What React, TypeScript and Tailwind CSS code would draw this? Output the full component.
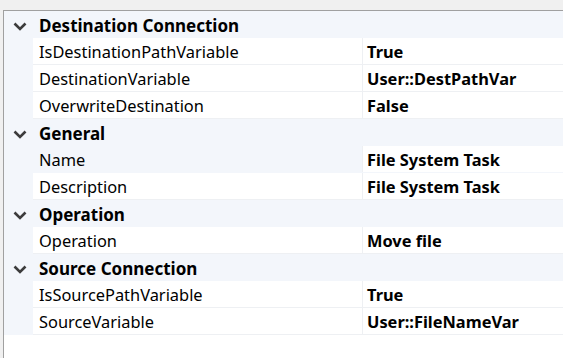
import React from 'react';

type Prop = { name: string; value: string; selected?: boolean };
type Category = { title: string; props: Prop[] };

const categories: Category[] = [
  {
    title: 'Destination Connection',
    props: [
      { name: 'IsDestinationPathVariable', value: 'True' },
      { name: 'DestinationVariable', value: 'User::DestPathVar' },
      { name: 'OverwriteDestination', value: 'False' },
    ],
  },
  {
    title: 'General',
    props: [
      { name: 'Name', value: 'File System Task', selected: true },
      { name: 'Description', value: 'File System Task' },
    ],
  },
  {
    title: 'Operation',
    props: [{ name: 'Operation', value: 'Move file' }],
  },
  {
    title: 'Source Connection',
    props: [
      { name: 'IsSourcePathVariable', value: 'True' },
      { name: 'SourceVariable', value: 'User::FileNameVar' },
    ],
  },
];

function Chevron() {
  return (
    <svg width="14" height="9" viewBox="0 0 14 9" className="ml-[9px] mt-[2px]">
      <polyline points="1.5,1.5 7,7 12.5,1.5" fill="none" stroke="#3c3c3c" strokeWidth="2.6" />
    </svg>
  );
}

export default function App() {
  return (
    <div
      className="w-[563px] h-[358px] bg-[#f0f0f0] pt-[10px] pl-[3px] overflow-hidden text-black"
      style={{ fontFamily: '"Noto Sans", "Open Sans", sans-serif' }}
    >
      <div className="h-full border-l border-t border-[#a0a0a0] bg-white text-[16.4px]">
        {categories.map(cat => (
          <div key={cat.title}>
            {/* Category header */}
            <div className="flex items-center h-[27px] bg-[#f3f6fb] pt-[2px]">
              <div className="w-[29px] flex items-center">
                <Chevron />
              </div>
              <span className="pl-[6px] font-bold text-[17px]">{cat.title}</span>
            </div>
            {cat.props.map(p => (
              <div key={p.name} className="flex h-[27px] bg-[#f3f6fb]">
                <div className="w-[29px] shrink-0" />
                <div
                  className={`flex-1 flex border-b ${p.selected ? 'border-[#f3f6fb]' : 'border-[#eef0f3] bg-white'}`}
                >
                  <div className="w-[329px] shrink-0 pl-[6px] pt-[2px] flex items-center">{p.name}</div>
                  <div className="flex-1 border-l border-[#eef0f3] bg-white pl-[4px] pt-[2px] flex items-center font-bold">
                    {p.value}
                  </div>
                </div>
              </div>
            ))}
          </div>
        ))}
      </div>
    </div>
  );
}
